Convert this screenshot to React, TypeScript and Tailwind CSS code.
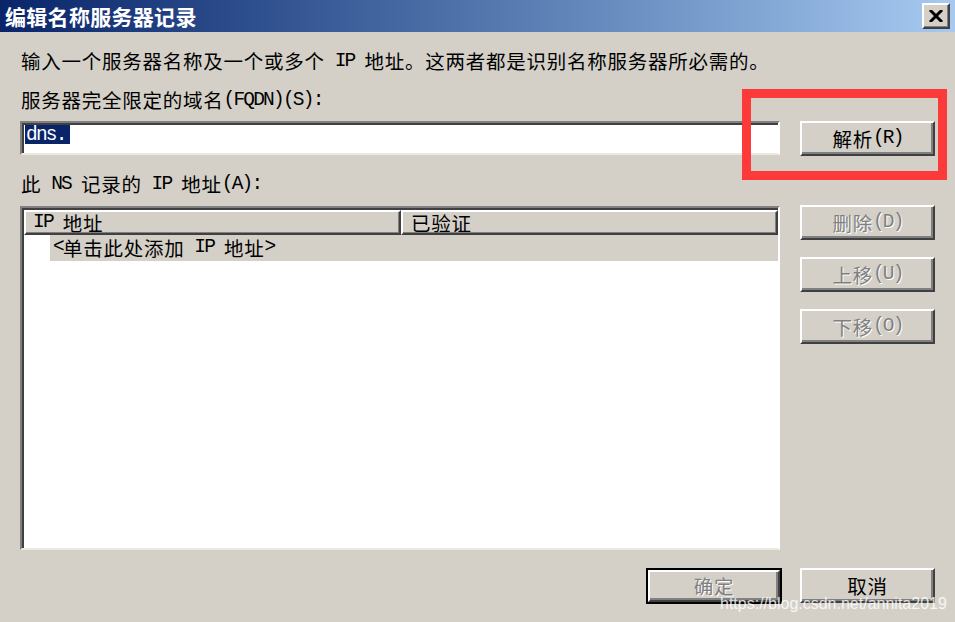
import type { ReactNode } from "react";

const CJK = '"SimSun", "Noto Sans CJK SC", "Noto Sans", sans-serif';

// latin bits look like SimSun's half-width glyphs; mono with tight tracking gets close
function L({ children }: { children: ReactNode }) {
  return (
    <span className="font-['Liberation_Mono',monospace] tracking-[-1.8px]">
      {children}
    </span>
  );
}

function Btn({
  children,
  disabled,
  isDefault,
}: {
  children: ReactNode;
  disabled?: boolean;
  isDefault?: boolean;
}) {
  const inner = (
    <div
      className={
        "flex h-full w-full items-center justify-center bg-[#d4d0c8] border-2 border-t-white border-l-white border-r-[#404040] border-b-[#404040] shadow-[inset_-2px_-2px_0_#808080] text-[19.5px] leading-none " +
        (disabled
          ? "text-[#808080] [text-shadow:1px_1px_0_#ffffff]"
          : "text-black")
      }
    >
      {children}
    </div>
  );

  if (isDefault) {
    return (
      <div className="h-[36px] w-[136px] border-2 border-black">{inner}</div>
    );
  }
  return <div className="h-[35px] w-[135px]">{inner}</div>;
}

export default function App() {
  return (
    <div
      className="relative h-[622px] w-[955px] overflow-hidden bg-[#d4d0c8] text-black"
      style={{ fontFamily: CJK }}
    >
      {/* Title bar */}
      <div className="flex h-[32px] items-center justify-between bg-linear-to-r from-[#0a246a] to-[#a6caf0] pl-[5px] pr-[5px]">
        <span className="text-[21px] font-bold leading-none text-white tracking-[0.3px]">
          编辑名称服务器记录
        </span>
        <div className="flex h-[26px] w-[28px] items-center justify-center bg-[#d4d0c8] border-2 border-t-white border-l-white border-r-[#404040] border-b-[#404040] shadow-[inset_-1px_-1px_0_#808080]">
          <svg width="14" height="12" viewBox="0 0 14 12">
            <path
              d="M2 1 L12 11 M12 1 L2 11"
              stroke="#000"
              strokeWidth="3"
              strokeLinecap="square"
            />
          </svg>
        </div>
      </div>

      {/* Body */}
      <div className="flex flex-col px-[20px] text-[19.5px] leading-[20px] tracking-[0.75px]">
        <p className="mt-[19px] flex h-[20px] items-center whitespace-pre pl-[1px]">
          输入一个服务器名称及一个或多个<L> IP </L>地址。这两者都是识别名称服务器所必需的。
        </p>

        <p className="mt-[19px] flex h-[20px] items-center whitespace-pre pl-[1px]">
          服务器完全限定的域名<L>(FQDN)(S):</L>
        </p>

        <div className="mt-[11px] flex gap-[20px]">
          <div className="h-[34px] flex-1 bg-white border-2 border-t-[#808080] border-l-[#808080] border-r-white border-b-[#ece9e2] shadow-[inset_2px_2px_0_#404040] pl-[3px] pt-[2px]">
            <span className="flex h-[19px] w-fit items-center bg-[#0a246a] pr-[4px] pl-[1px] text-white">
              <L>dns.</L>
            </span>
          </div>
          <Btn>
            解析<L>(R)</L>
          </Btn>
        </div>

        <p className="mt-[18px] flex h-[20px] items-center whitespace-pre pl-[1px]">
          此<L> NS </L>记录的<L> IP </L>地址<L>(A):</L>
        </p>

        <div className="mt-[12px] flex gap-[20px]">
          {/* List view */}
          <div className="flex h-[344px] flex-1 flex-col bg-white border-2 border-t-[#808080] border-l-[#808080] border-r-white border-b-[#ece9e2] shadow-[inset_2px_2px_0_#404040] pl-[2px] pt-[2px]">
            <div className="flex h-[25px] leading-none">
              <div className="flex w-[377px] items-center whitespace-pre bg-[#d4d0c8] border-2 border-t-white border-l-white border-r-[#404040] border-b-[#404040] shadow-[inset_-1px_-1px_0_#808080] pl-[7px]">
                <L>IP </L>地址
              </div>
              <div className="flex flex-1 items-center bg-[#d4d0c8] border-2 border-t-white border-l-white border-r-[#404040] border-b-[#404040] shadow-[inset_-1px_-1px_0_#808080] pl-[8px]">
                已验证
              </div>
            </div>
            <div className="flex h-[26px] pl-[26px] leading-none">
              <div className="flex flex-1 items-center whitespace-pre bg-[#d4d0c8] pl-[3px]">
                <L>&lt;</L>单击此处添加<L> IP </L>地址<L>&gt;</L>
              </div>
            </div>
          </div>

          <div className="-mt-[1px] flex flex-col gap-[17px]">
            <Btn disabled>
              删除<L>(D)</L>
            </Btn>
            <Btn disabled>
              上移<L>(U)</L>
            </Btn>
            <Btn disabled>
              下移<L>(O)</L>
            </Btn>
          </div>
        </div>

        <div className="mt-[18px] flex justify-end gap-[18px]">
          <Btn disabled isDefault>
            确定
          </Btn>
          <Btn>取消</Btn>
        </div>
      </div>

      {/* Red highlight box drawn over the screenshot */}
      <div className="absolute left-[742px] top-[89px] h-[91px] w-[205px] border-[9px] border-[#fd3a3a]" />

      {/* Watermark */}
      <div className="absolute left-[720px] top-[596px] font-['Liberation_Sans',sans-serif] text-[16px] leading-[16px] text-white/80">
        https://blog.csdn.net/annita2019
      </div>
    </div>
  );
}
